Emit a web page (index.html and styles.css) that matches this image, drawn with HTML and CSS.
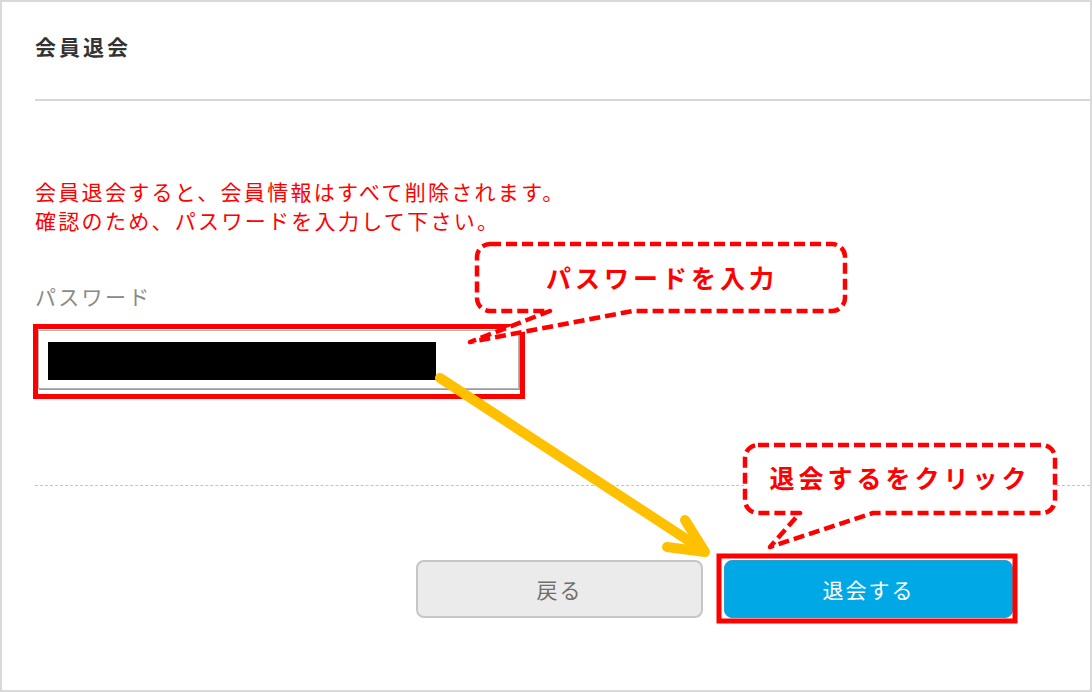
FILE: index.html
```html
<!DOCTYPE html>
<html lang="ja">
<head>
  <meta charset="UTF-8" />
  <meta name="viewport" content="width=device-width, initial-scale=1.0"/>
  <title>会員退会</title>
  <link rel="stylesheet" href="styles.css">
</head>
<body>

<div class="panel">
  <div class="panel-head">
    <h1>会員退会</h1>
  </div>

  <div class="panel-body">
    <p class="notice">
      会員退会すると、会員情報はすべて削除されます。<br>
      確認のため、パスワードを入力して下さい。
    </p>

    <label class="field-label" for="password">パスワード</label>
    <div class="field" id="password">
      <span class="masked"></span>
    </div>
  </div>

  <div class="panel-foot">
    <button class="btn btn-back">戻る</button>
    <button class="btn btn-leave">退会する</button>
  </div>
</div>

<!-- annotations drawn over the page -->
<svg class="annot" width="1092" height="692" viewBox="0 0 1092 692">
  <rect class="mark" x="35.5" y="326.5" width="487" height="70" />
  <rect class="mark" x="719" y="556" width="296" height="65" stroke-width="6" />

  <path class="bubble" d="M490,244 H832 A13,13 0 0 1 845,257 V298 A13,13 0 0 1 832,311 H633 L470,342 L550,311 H490 A13,13 0 0 1 477,298 V257 A13,13 0 0 1 490,244 Z" />
  <text class="bubble-text" x="662" y="277">パスワードを入力</text>

  <path class="bubble" d="M758,445 H1042 A13,13 0 0 1 1055,458 V500 A13,13 0 0 1 1042,513 H873 L770,547 L800,513 H758 A13,13 0 0 1 745,500 V458 A13,13 0 0 1 758,445 Z" />
  <text class="bubble-text" x="900" y="477">退会するをクリック</text>

  <path class="arrow" d="M440,378 L703,550" />
  <path class="arrow" d="M685,520 L705,552 L667,547" />
</svg>

</body>
</html>
```

FILE: styles.css
```css
body {
  font-family: "Noto Sans CJK JP", "Noto Sans", sans-serif;
  background-color: #fff;
  margin: 0;
  padding: 0;
  width: 1092px;
  height: 692px;
  position: relative;
  overflow: hidden;
}
.panel {
  box-sizing: border-box;
  width: 1092px;
  height: 692px;
  border: 2px solid #d9d9d9;
  background-color: #fff;
}
.panel-head {
  margin-left: 33px;
  padding-top: 29px;
  height: 68px;
  border-bottom: 2px solid #d7d7d7;
}
.panel-head h1 {
  margin: 0;
  font-size: 21px;
  line-height: 30px;
  letter-spacing: 3px;
  font-weight: bold;
  color: #333;
}
.panel-body {
  margin-left: 33px;
  padding-top: 76px;
  height: 308px;
}
.notice {
  margin: 0;
  font-size: 21px;
  line-height: 29px;
  letter-spacing: 2.3px;
  color: #ff0000;
}
.field-label {
  display: block;
  margin-top: 47px;
  font-size: 21px;
  line-height: 29px;
  letter-spacing: 2.3px;
  color: #8a8a8a;
}
.field {
  box-sizing: border-box;
  margin: 19px 0 0 3px;
  width: 481px;
  height: 59px;
  padding: 11px 9px;
  border: 1px solid #b4b4b4;
  box-shadow: 1px 1px 0 #9a9a9a;
  background-color: #fff;
}
.masked {
  display: block;
  width: 388px;
  height: 38px;
  background-color: #000;
}
.panel-foot {
  margin-left: 33px;
  border-top: 1px dashed #c4c4c4;
  padding: 74px 77px 0 0;
  display: flex;
  justify-content: flex-end;
  gap: 21px;
}
.btn {
  box-sizing: border-box;
  width: 287px;
  height: 58px;
  border-radius: 8px;
  font-family: inherit;
  font-size: 21px;
  letter-spacing: 2px;
  cursor: pointer;
}
.btn-back {
  background-color: #ebebeb;
  border: 2px solid #c6c6c6;
  color: #6f6f6f;
}
.btn-leave {
  width: 289px;
  background-color: #00a8e6;
  border: 1px solid #2a9fc9;
  color: #fff;
}
.annot {
  position: absolute;
  top: 0;
  left: 0;
  pointer-events: none;
}
.mark {
  fill: none;
  stroke: #ff0000;
  stroke-width: 5;
}
.bubble {
  fill: #fff;
  stroke: #ff0000;
  stroke-width: 4.5;
  stroke-dasharray: 11 5;
  stroke-linejoin: round;
}
.bubble-text {
  font-family: "Noto Sans CJK JP", sans-serif;
  font-size: 25px;
  font-weight: bold;
  letter-spacing: 4px;
  fill: #ff0000;
  text-anchor: middle;
  dominant-baseline: central;
}
.arrow {
  fill: none;
  stroke: #ffc000;
  stroke-width: 10;
  stroke-linecap: round;
  stroke-linejoin: round;
}
```
